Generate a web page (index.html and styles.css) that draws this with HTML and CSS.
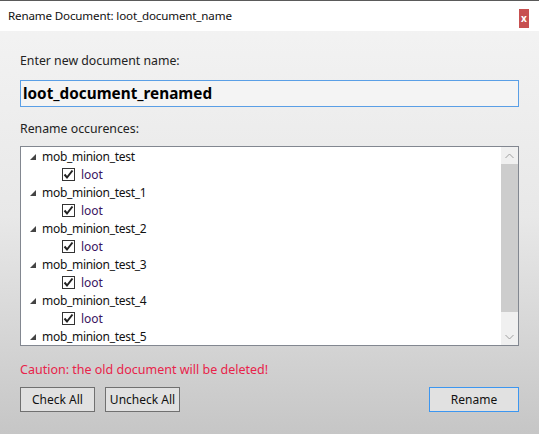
FILE: index.html
```html
<!DOCTYPE html>
<html>
<head>
<meta charset="utf-8">
<link rel="stylesheet" href="styles.css">
</head>
<body>
<div class="window">
  <div class="titlebar">
    <span class="title">Rename Document: loot_document_name</span>
    <span class="close">x</span>
  </div>
  <div class="content">
    <div class="label first">Enter new document name:</div>
    <div class="namebox">loot_document_renamed</div>
    <div class="label">Rename occurences:</div>
    <div class="tree">
      <div class="rows">
        <div class="row parent"><span class="tri"></span>mob_minion_test</div>
        <div class="row child"><span class="cb"><svg width="11" height="11" viewBox="0 0 11 11"><path d="M1.5 5.5 L4 8.5 L9.5 1.5" fill="none" stroke="#222" stroke-width="2"/></svg></span>loot</div>
        <div class="row parent"><span class="tri"></span>mob_minion_test_1</div>
        <div class="row child"><span class="cb"><svg width="11" height="11" viewBox="0 0 11 11"><path d="M1.5 5.5 L4 8.5 L9.5 1.5" fill="none" stroke="#222" stroke-width="2"/></svg></span>loot</div>
        <div class="row parent"><span class="tri"></span>mob_minion_test_2</div>
        <div class="row child"><span class="cb"><svg width="11" height="11" viewBox="0 0 11 11"><path d="M1.5 5.5 L4 8.5 L9.5 1.5" fill="none" stroke="#222" stroke-width="2"/></svg></span>loot</div>
        <div class="row parent"><span class="tri"></span>mob_minion_test_3</div>
        <div class="row child"><span class="cb"><svg width="11" height="11" viewBox="0 0 11 11"><path d="M1.5 5.5 L4 8.5 L9.5 1.5" fill="none" stroke="#222" stroke-width="2"/></svg></span>loot</div>
        <div class="row parent"><span class="tri"></span>mob_minion_test_4</div>
        <div class="row child"><span class="cb"><svg width="11" height="11" viewBox="0 0 11 11"><path d="M1.5 5.5 L4 8.5 L9.5 1.5" fill="none" stroke="#222" stroke-width="2"/></svg></span>loot</div>
        <div class="row parent"><span class="tri"></span>mob_minion_test_5</div>
      </div>
      <div class="scrollbar">
        <div class="arrow"><svg width="9" height="6" viewBox="0 0 9 6"><path d="M0.5 5 L4.5 1 L8.5 5" fill="none" stroke="#a0a0a0" stroke-width="1"/></svg></div>
        <div class="thumb"></div>
        <div class="track"></div>
        <div class="arrow"><svg width="9" height="6" viewBox="0 0 9 6"><path d="M0.5 1 L4.5 5 L8.5 1" fill="none" stroke="#a0a0a0" stroke-width="1"/></svg></div>
      </div>
    </div>
    <div class="caution">Caution: the old document will be deleted!</div>
    <div class="buttons">
      <div class="btn">Check All</div>
      <div class="btn">Uncheck All</div>
      <div class="spacer"></div>
      <div class="btn primary">Rename</div>
    </div>
  </div>
</div>
</body>
</html>
```
FILE: styles.css
```css
html, body {
  margin: 0;
  padding: 0;
}
body {
  width: 539px;
  height: 434px;
  overflow: hidden;
  font-family: "Noto Sans", "Open Sans", sans-serif;
  font-size: 12px;
  color: #000;
}
.window {
  width: 539px;
  height: 434px;
  display: flex;
  flex-direction: column;
  background: linear-gradient(to bottom, #f4f4f4 0%, #e8e8e8 50%, #c6c6c6 100%);
}
.titlebar {
  height: 30px;
  border-top: 1px solid #5a5a5a;
  background: #fff;
  display: flex;
  align-items: flex-start;
  position: relative;
}
.title {
  margin-left: 8px;
  margin-top: 7px;
  font-size: 11.6px;
  letter-spacing: -0.15px;
  color: #111;
}
.close {
  position: absolute;
  left: 519px;
  top: 8px;
  width: 10px;
  height: 19px;
  background: #c75050;
  color: #fff;
  font-weight: bold;
  font-size: 10px;
  line-height: 18px;
  text-align: center;
}
.content {
  flex: 1;
  padding: 0 20px 0 20px;
  display: flex;
  flex-direction: column;
}
.label {
  height: 17px;
  line-height: 17px;
  color: #222;
  font-size: 12.3px;
}
.label.first {
  margin-top: 21px;
}
.namebox {
  margin-top: 11px;
  height: 25px;
  border: 1px solid #5a9fe6;
  background: #f4f4f4;
  font-size: 15.3px;
  font-weight: bold;
  line-height: 25px;
  padding-left: 2px;
  margin-bottom: 13px;
  width: 495px;
  color: #000;
}
.tree {
  margin-top: 9px;
  width: 497px;
  height: 198px;
  border: 1px solid #828790;
  background: #fff;
  display: flex;
}
.rows {
  flex: 1;
  display: flex;
  flex-direction: column;
}
.row {
  height: 18px;
  display: flex;
  align-items: center;
  color: #111;
  letter-spacing: -0.3px;
  padding-top: 1px;
  box-sizing: border-box;
}
.parent {
  padding-left: 9px;
}
.tri {
  width: 0;
  height: 0;
  border-left: 6px solid transparent;
  border-bottom: 6px solid #444;
  margin-right: 6px;
  margin-top: 1px;
}
.child {
  padding-left: 41px;
  color: #3a1460;
  letter-spacing: 0;
}
.cb {
  width: 11px;
  height: 11px;
  border: 1px solid #333;
  background: #fff;
  margin-right: 6px;
  display: flex;
}
.scrollbar {
  width: 17px;
  background: #f0f0f0;
  display: flex;
  flex-direction: column;
}
.arrow {
  height: 17px;
  display: flex;
  align-items: center;
  justify-content: center;
}
.thumb {
  height: 148px;
  background: #cdcdcd;
}
.track {
  flex: 1;
}
.caution {
  margin-top: 15px;
  color: #e8234a;
  height: 17px;
  line-height: 17px;
  font-size: 12.5px;
}
.buttons {
  margin-top: 9px;
  display: flex;
  gap: 10px;
  width: 499px;
}
.spacer {
  flex: 1;
}
.btn {
  width: 73px;
  height: 23px;
  border: 1px solid #707070;
  background: #e1e1e1;
  text-align: center;
  line-height: 23px;
  color: #111;
}
.btn.primary {
  width: 88px;
  border-color: #3c96f0;
}
```
